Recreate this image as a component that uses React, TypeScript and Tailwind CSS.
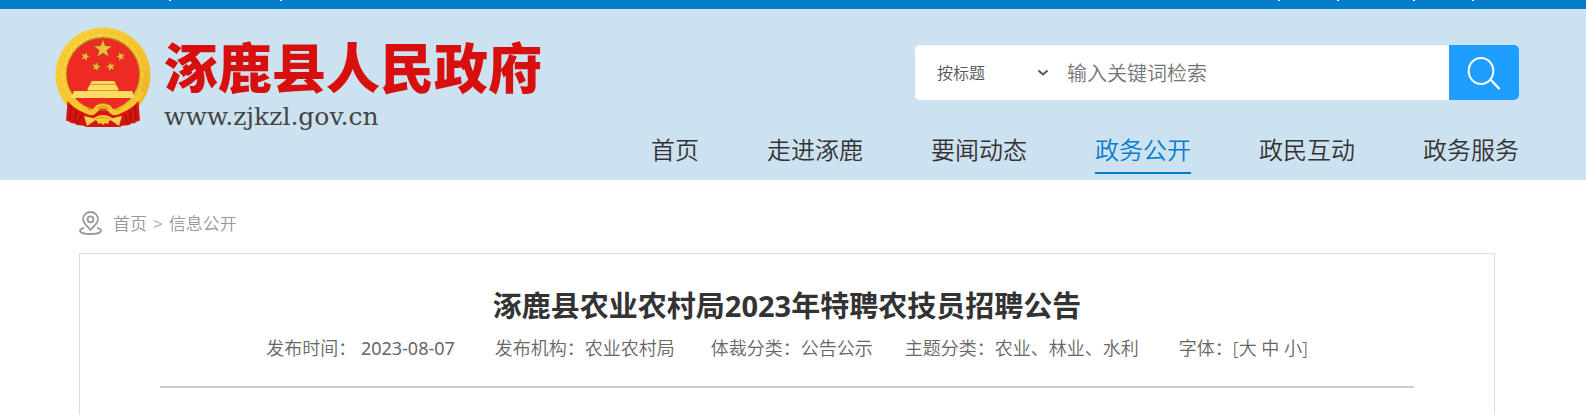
const navItems = ['首页', '走进涿鹿', '要闻动态', '政务公开', '政民互动', '政务服务'];

export default function App() {
  return (
    <div className="flex min-h-screen flex-col bg-white font-['Noto_Sans','Noto_Sans_CJK_SC',sans-serif] text-[#333]">
      <TopBar />
      <Header />
      <main className="ml-[79px] mr-[91px] flex flex-1 flex-col">
        <Breadcrumb />
        <Article />
      </main>
    </div>
  );
}

function TopBar() {
  return (
    <div className="flex h-[9px] items-start justify-between bg-[#027dc7] pl-[169px] pr-[112px]">
      <div className="flex gap-[109px]">
        <Divider />
        <Divider />
      </div>
      <div className="flex gap-[57px]">
        <Divider />
        <Divider />
        <span className="flex gap-[57px] pl-[17px]">
          <Divider />
          <Divider />
        </span>
      </div>
    </div>
  );
}

function Divider() {
  return <span className="h-px w-0.5 bg-white" />;
}

function Header() {
  return (
    <header className="flex justify-between bg-[#cde2f0] pb-1.5 pl-[55px] pr-[67px]">
      <a href="#" className="flex gap-[13px] pt-[18px]">
        <Emblem />
        <span className="flex flex-col gap-1.5 pt-2">
          <span className="whitespace-nowrap font-['Noto_Sans_CJK_SC',sans-serif] text-[54px] font-black leading-[62px] text-[#d7100f]">
            涿鹿县人民政府
          </span>
          <span className="font-['DejaVu_Serif',serif] text-[25px] leading-7 text-[#444]">www.zjkzl.gov.cn</span>
        </span>
      </a>
      <div className="flex flex-col items-end pt-9">
        <SearchBox />
        <nav className="mt-[34px] flex gap-[68px]">
          {navItems.map((label) => (
            <a
              key={label}
              href="#"
              className={`whitespace-nowrap border-b-2 pb-1.5 text-2xl leading-8 font-[350] ${
                label === '政务公开' ? 'border-[#007ecc] text-[#007ecc]' : 'border-transparent'
              }`}
            >
              {label}
            </a>
          ))}
        </nav>
      </div>
    </header>
  );
}

function SearchBox() {
  return (
    <form className="flex h-[55px] w-[604px] overflow-hidden rounded-[5px] bg-white" onSubmit={(e) => e.preventDefault()}>
      <div className="flex items-center pl-[22px]">
        <select aria-label="检索范围" className="w-[100px] appearance-none bg-transparent text-base font-[350] text-[#555] outline-none">
          <option>按标题</option>
          <option>按内容</option>
        </select>
        <ChevronIcon />
      </div>
      <input
        type="text"
        aria-label="关键词"
        placeholder="输入关键词检索"
        className="ml-[18px] min-w-0 flex-1 pt-0.5 text-xl font-[350] outline-none placeholder:text-[#757575]"
      />
      <button type="submit" aria-label="检索" className="flex w-[70px] items-center justify-center bg-[#1e9fff] text-white">
        <SearchIcon />
      </button>
    </form>
  );
}

function Breadcrumb() {
  return (
    <div className="flex h-[73px] items-center gap-[11px] pt-3 text-[17px] font-[350] text-[#999]">
      <PinIcon />
      <div className="flex gap-1.5 pt-0.5">
        <a href="#">首页</a>
        <span>&gt;</span>
        <a href="#">信息公开</a>
      </div>
    </div>
  );
}

function Article() {
  return (
    <article className="flex-1 border border-b-0 border-[#ddd] px-20 pt-8">
      <h1 className="text-center text-[29px] font-bold leading-10">涿鹿县农业农村局2023年特聘农技员招聘公告</h1>
      <div className="flex justify-center whitespace-nowrap border-b-2 border-[#ccc] pb-6 pt-2 text-lg font-[350] leading-7 text-[#666]">
        <span>
          发布时间： <time className="font-normal">2023-08-07</time>
        </span>
        <span className="ml-10">发布机构：农业农村局</span>
        <span className="ml-9">体裁分类：公告公示</span>
        <span className="ml-8">主题分类：农业、林业、水利</span>
        <span className="ml-10">
          字体：[<button type="button">大</button> <button type="button">中</button> <button type="button">小</button>]
        </span>
      </div>
    </article>
  );
}

function ChevronIcon() {
  return (
    <svg viewBox="0 0 12 8" className="h-2 w-3" fill="none" stroke="#555" strokeWidth="2">
      <path d="M1.500 1.500L6 5.500l4.500-4" />
    </svg>
  );
}

function SearchIcon() {
  return (
    <svg viewBox="0 0 34 34" className="h-[34px] w-[34px]" fill="none" stroke="currentColor" strokeWidth="2">
      <ellipse cx="14" cy="15" rx="12.300" ry="13" />
      <path d="M23 23l9.500 10" strokeWidth="2.500" />
    </svg>
  );
}

function PinIcon() {
  return (
    <svg viewBox="0 0 23 24" className="h-6 w-[23px]" fill="none" stroke="#999" strokeWidth="1.800">
      <path d="M11.500 19C7.500 14.500 4 12 4 8.200a7.500 7.200 0 0115 0C19 12 15.500 14.500 11.500 19z" />
      <circle cx="11.500" cy="8.300" r="3" />
      <path d="M5 16.800C2.500 17.500 1 18.600 1 19.700c0 2 4.700 3.300 10.500 3.300S22 21.700 22 19.700c0-1.100-1.500-2.200-4-2.900" />
    </svg>
  );
}

const STAR = 'M0-10L2.400-3.300 9.500-3.100 3.900 1.300 5.900 8.100 0 4.100-5.900 8.100-3.900 1.300-9.500-3.100-2.400-3.300z';

function Emblem() {
  return (
    <svg viewBox="0 0 96 101" className="h-[101px] w-24" aria-label="国徽">
      <defs>
        <linearGradient id="gold" x1="0" y1="0" x2="1" y2="1">
          <stop offset="0" stopColor="#f9d13c" />
          <stop offset="0.5" stopColor="#f6c62f" />
          <stop offset="1" stopColor="#edb02a" />
        </linearGradient>
      </defs>
      <circle cx="48" cy="48" r="47.500" fill="url(#gold)" />
      <circle cx="48" cy="48" r="43" fill="none" stroke="#d9a021" strokeWidth="2" strokeDasharray="2 5" opacity="0.25" />
      <circle cx="48" cy="48" r="39.500" fill="none" stroke="#fde06a" strokeWidth="2" strokeDasharray="3 4" opacity="0.4" />
      <circle cx="48" cy="47" r="37" fill="#b67a1b" />
      <circle cx="48" cy="47.500" r="36" fill="#ee2a24" />
      <g fill="#eabf38" stroke="#8f3a12" strokeWidth="0.500">
        <path d={STAR} transform="translate(48 22)" />
        <path d={STAR} transform="translate(30.300 29.500) scale(.5) rotate(18)" />
        <path d={STAR} transform="translate(65.700 29.500) scale(.5) rotate(-18)" />
        <path d={STAR} transform="translate(41.300 39.700) scale(.5) rotate(12)" />
        <path d={STAR} transform="translate(55.700 39.700) scale(.5) rotate(-12)" />
      </g>
      {/* curtain */}
      <path d="M13 68c7 10 17 16 35 16s28-6 35-16l2 26c-3-1-5 4-8 2-4 4-9 1-12 4H31c-3-3-8 0-12-4-3 2-5-3-8-2z" fill="#d9140f" />
      <path d="M18 68h60c-6 8-14 13-22 13l-8-6-8 6c-8 0-16-5-22-13z" fill="#ee2a24" />
      <path d="M16 78l-1 15M21 84l-1 11M26 88l-3 8M80 78l1 15M75 84l1 11M70 88l3 8" stroke="#a3120d" strokeWidth="1.500" />
      {/* gate */}
      <g fill="#f9dc62">
        <path d="M37 54h22l2 3H35zM35 57.500h26l3 5.500H32z" />
        <path d="M19 64h58l3 7H16z" />
      </g>
      <path d="M35 57.500h26M33 63.500h30" stroke="#d39a28" />
      {/* wreath */}
      <path
        d="M9 65c5 9 14 16 24 20 5 2 7-1 9-4 2-2 4-2 6-2s4 0 6 2c2 3 4 6 9 4 10-4 19-11 24-20"
        fill="none"
        stroke="#f6c62f"
        strokeWidth="5"
      />
      <path d="M43 78c3-2 7-2 10 0M42 82c4-3 8-3 12 0" fill="none" stroke="#c98a20" />
      {/* gear and ribbon ends */}
      <path d="M29 89l13 3-10 7zM67 89l-13 3 10 7z" fill="#f5cf52" />
      <path d="M39 91c5-4 13-4 18 0l-1 2-2 1-1 3-3-1-2 2-2-2-3 1-1-3-2-1z" fill="#f7ca35" />
      <path d="M41 92c5-2 9-2 14 0" fill="none" stroke="#d39a28" />
    </svg>
  );
}
